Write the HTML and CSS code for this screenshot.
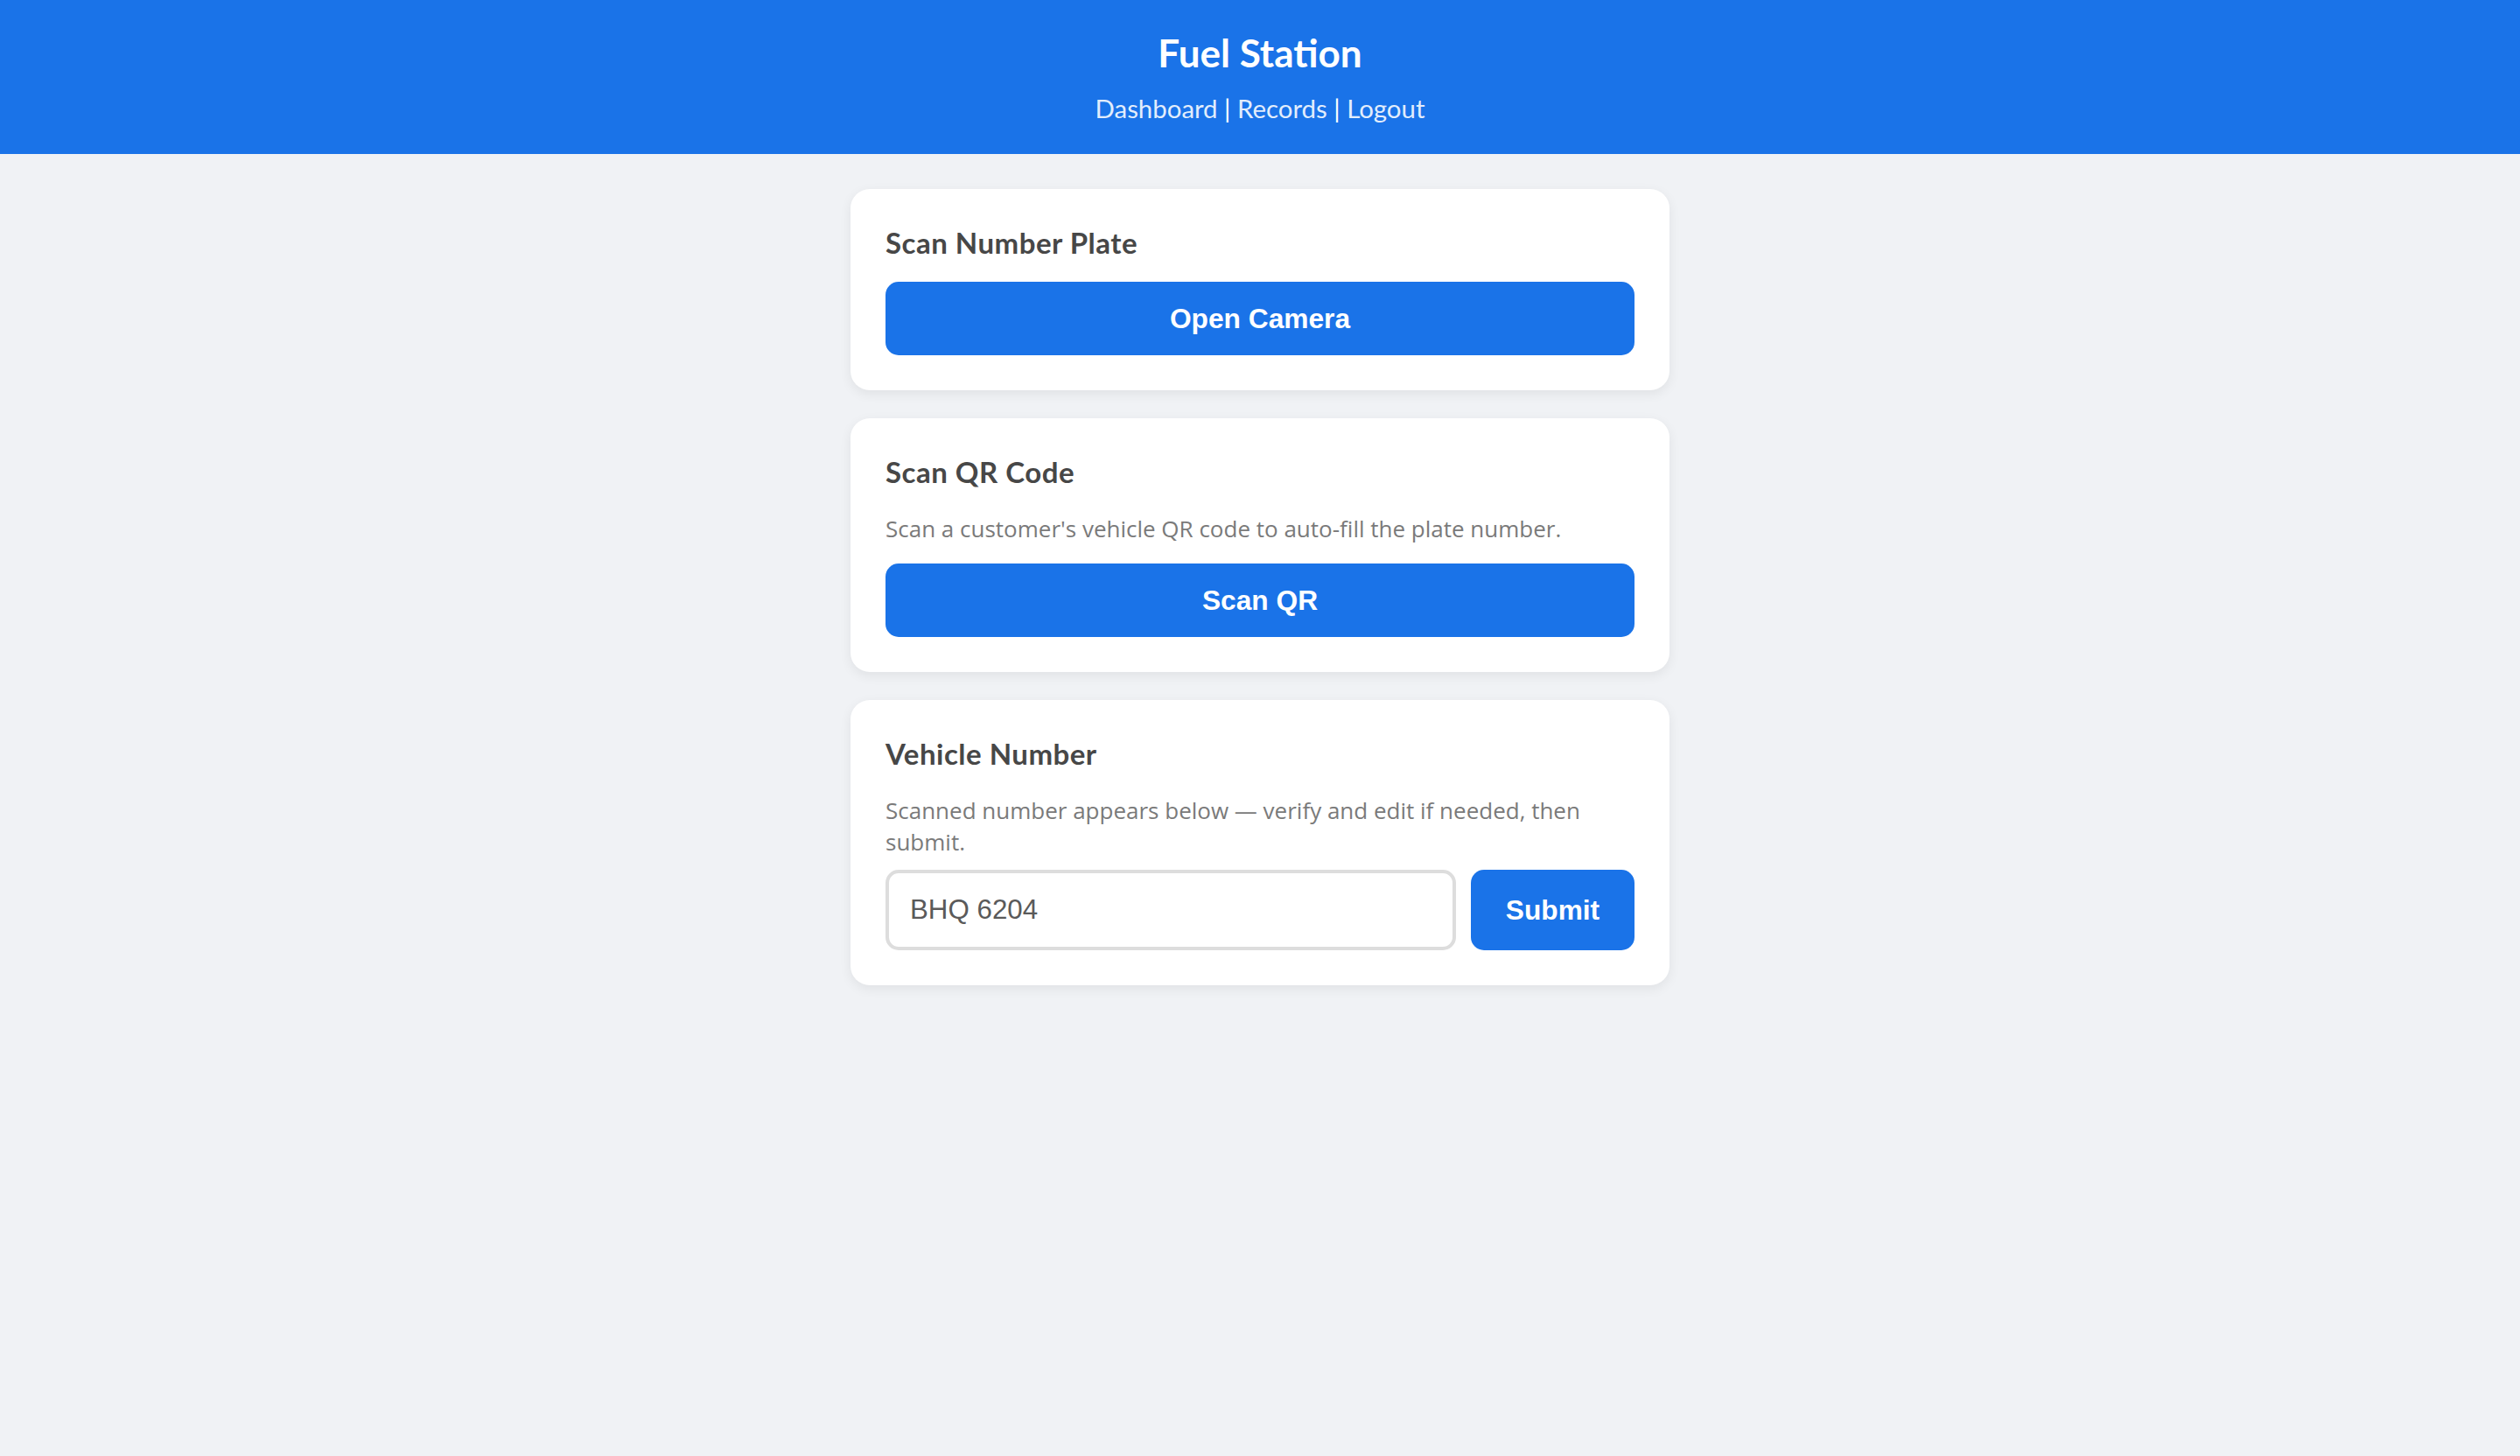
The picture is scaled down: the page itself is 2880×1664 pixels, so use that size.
FILE: index.html
```html
<!DOCTYPE html>
<html lang="en">
<head>
<meta charset="utf-8">
<title>Fuel Station</title>
<link rel="stylesheet" href="styles.css">
</head>
<body>
<header class="topbar">
  <h1 class="brand">Fuel Station</h1>
  <nav class="nav">
    <a href="#" class="nav-link">Dashboard</a> | <a href="#" class="nav-link">Records</a> | <a href="#" class="nav-link">Logout</a>
  </nav>
</header>
<main class="container">
  <section class="card">
    <h2 class="card-title">Scan Number Plate</h2>
    <button class="btn btn-block">Open Camera</button>
  </section>
  <section class="card">
    <h2 class="card-title">Scan QR Code</h2>
    <p class="card-desc">Scan a customer's vehicle QR code to auto-fill the plate number.</p>
    <button class="btn btn-block">Scan QR</button>
  </section>
  <section class="card">
    <h2 class="card-title">Vehicle Number</h2>
    <p class="card-desc card-desc-tight">Scanned number appears below — verify and edit if needed, then submit.</p>
    <form class="plate-row" onsubmit="return false;">
      <input class="plate-input" type="text" value="BHQ 6204">
      <button class="btn btn-submit" type="submit">Submit</button>
    </form>
  </section>
</main>
</body>
</html>
```

FILE: styles.css
```css
* { box-sizing: border-box; }

html, body {
  margin: 0;
  padding: 0;
}

body {
  background: #f0f2f5;
  font-family: Lato, "Open Sans", sans-serif;
  color: #444;
  min-height: 1664px;
}

.topbar {
  background: #1a73e8;
  height: 176px;
  padding-top: 30px;
  text-align: center;
  color: #fff;
}

.brand {
  margin: 0;
  font-size: 44px;
  line-height: 60px;
  font-weight: 700;
  color: #fff;
}

.nav {
  margin-top: 14px;
  font-size: 29.4px;
  line-height: 40px;
  color: #fff;
}

.nav-link {
  color: #e2edfc;
  text-decoration: none;
}

.container {
  width: 936px;
  margin: 40px auto 0;
  display: flex;
  flex-direction: column;
  gap: 32px;
}

.card {
  background: #fff;
  border-radius: 22px;
  padding: 40px;
  box-shadow: 0 4px 14px rgba(0, 0, 0, 0.07);
}

.card-title {
  margin: 0 0 24px;
  font-size: 33px;
  line-height: 42px;
  font-weight: 700;
  letter-spacing: 0.5px;
  color: #474747;
}

.card-desc {
  margin: 26px 0 22px;
  font-family: "Open Sans", "Noto Sans", sans-serif;
  font-size: 26px;
  line-height: 36px;
  color: #7a7a7a;
}

.card-desc-tight {
  margin-bottom: 14px;
}

.btn {
  border: 0;
  background: #1a73e8;
  color: #fff;
  font-family: "Liberation Sans", Arial, sans-serif;
  font-weight: 700;
  font-size: 31.7px;
  border-radius: 15px;
  cursor: pointer;
}

.btn-block {
  display: block;
  width: 100%;
  height: 84px;
}

.plate-row {
  display: flex;
  gap: 17px;
  margin: 0;
}

.plate-input {
  flex: 1;
  min-width: 0;
  height: 92px;
  border: 4px solid #ddd;
  border-radius: 15px;
  padding: 0 24px;
  font-family: "Liberation Sans", Arial, sans-serif;
  font-size: 31.3px;
  color: #5a5a5a;
  background: #fff;
  outline: none;
}

.btn-submit {
  width: 187px;
  height: 92px;
  flex: none;
}
```
